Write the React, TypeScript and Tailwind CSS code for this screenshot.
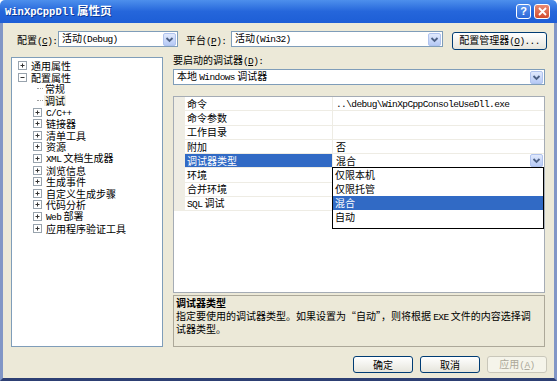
import React from "react";

// ASCII parts look like SimSun's half-width glyphs, so use a narrow mono
const M: React.FC<{ children: React.ReactNode }> = ({ children }) => (
  <span className="font-['Liberation_Mono',monospace] text-[9.5px] tracking-[-0.6px]">{children}</span>
);

const DropBtn = () => (
  <svg width="13" height="13" viewBox="0 0 13 13" className="shrink-0">
    <defs>
      <linearGradient id="dropg" x1="0" y1="0" x2="0" y2="1">
        <stop offset="0" stopColor="#e3ebfd" />
        <stop offset="1" stopColor="#b4c8f5" />
      </linearGradient>
    </defs>
    <rect x="0.5" y="0.5" width="12" height="12" rx="1.5" fill="url(#dropg)" stroke="#b0c3ee" />
    <path d="M3.5 5L6.5 8L9.5 5" fill="none" stroke="#4d6185" strokeWidth="1.8" />
  </svg>
);

const ExpandBox: React.FC<{ open?: boolean }> = ({ open }) => (
  <svg width="9" height="9" viewBox="0 0 9 9" className="shrink-0">
    <rect x="0.5" y="0.5" width="8" height="8" fill="#fff" stroke="#98a3ad" />
    <path d="M2.5 4.5H6.5" stroke="#333" />
    {!open && <path d="M4.5 2.5V6.5" stroke="#333" />}
  </svg>
);

const Combo: React.FC<{ className: string; children: React.ReactNode }> = ({ className, children }) => (
  <div className={`h-[16px] flex items-center border border-[#7f9db9] bg-white pl-[3px] pr-px ${className}`}>
    <div className="flex-1 whitespace-nowrap leading-[14px]">{children}</div>
    <DropBtn />
  </div>
);

const XpButton: React.FC<{ children: React.ReactNode; disabled?: boolean }> = ({ children, disabled }) => (
  <div
    className={
      disabled
        ? "w-[60px] h-[17px] flex items-center justify-center rounded-[3px] border border-[#c9c7ba] bg-[#f5f4ea] text-[#aca899] leading-none"
        : "w-[60px] h-[17px] flex items-center justify-center rounded-[3px] border border-[#003c74] bg-gradient-to-b from-white to-[#e6e5dc] leading-none"
    }
  >
    <span>{children}</span>
  </div>
);

type TreeNode = { label: React.ReactNode; kind: "top" | "topOpen" | "child" | "leaf"; sel?: boolean };

const tree: TreeNode[] = [
  { label: "通用属性", kind: "top" },
  { label: "配置属性", kind: "topOpen" },
  { label: "常规", kind: "leaf" },
  { label: "调试", kind: "leaf", sel: true },
  { label: <M>C/C++</M>, kind: "child" },
  { label: "链接器", kind: "child" },
  { label: "清单工具", kind: "child" },
  { label: "资源", kind: "child" },
  { label: <><M>XML</M> 文档生成器</>, kind: "child" },
  { label: "浏览信息", kind: "child" },
  { label: "生成事件", kind: "child" },
  { label: "自定义生成步骤", kind: "child" },
  { label: "代码分析", kind: "child" },
  { label: <><M>Web</M> 部署</>, kind: "child" },
  { label: "应用程序验证工具", kind: "child" },
];

const rows: { n: React.ReactNode; v: React.ReactNode; sel?: boolean }[] = [
  { n: "命令", v: <M>..\debug\WinXpCppConsoleUseDll.exe</M> },
  { n: "命令参数", v: "" },
  { n: "工作目录", v: "" },
  { n: "附加", v: "否" },
  { n: "调试器类型", v: "混合", sel: true },
  { n: "环境", v: "" },
  { n: "合并环境", v: "" },
  { n: <><M>SQL</M> 调试</>, v: "" },
];

const options = ["仅限本机", "仅限托管", "混合", "自动"];

export default function App() {
  return (
    <div className="w-[557px] h-[383px] bg-white overflow-hidden font-['Noto_Sans_CJK_SC',sans-serif] text-[10px] text-black">
      <div className="h-[381px] flex flex-col">
        {/* title bar */}
        <div className="h-[23px] flex items-center rounded-t-[5px] bg-gradient-to-b from-[#4d8fec] via-[#2566db] to-[#1d5ed6] pl-[5px] pr-[7px]">
          <div className="flex-1 text-white font-bold text-[11.5px] leading-none [text-shadow:1px_1px_0_#0b3a9a]">
            <span className="font-['Liberation_Mono',monospace] text-[10.5px]">WinXpCppDll</span> 属性页
          </div>
          <div className="w-[15px] h-[15px] rounded-[3px] border border-white bg-gradient-to-b from-[#5b95f0] to-[#2d68d8] flex items-center justify-center text-white font-bold text-[11px] leading-none font-['Liberation_Sans',sans-serif]">
            ?
          </div>
          <div className="ml-[3px] w-[16px] h-[15px] rounded-[3px] border border-white bg-gradient-to-b from-[#e98a72] to-[#d24a2c] flex items-center justify-center">
            <svg width="9" height="9" viewBox="0 0 9 9">
              <path d="M1 1L8 8M8 1L1 8" stroke="#fff" strokeWidth="1.8" />
            </svg>
          </div>
        </div>

        {/* body */}
        <div className="flex-1 flex flex-col bg-[#ece9d8] border-x-[3px] border-x-[#8196c6] border-b-[3px] border-b-[#2d3f73] pl-[8px] pt-[8px] pb-[5px]">
          {/* config row */}
          <div className="flex items-start h-[19px]">
            <div className="ml-[6px] w-[41px] h-[16px] mt-px leading-[16px] whitespace-nowrap">
              配置<M>(<u>C</u>):</M>
            </div>
            <Combo className="w-[120px]">
              活动<M>(Debug)</M>
            </Combo>
            <div className="ml-[8px] w-[45px] h-[16px] mt-px leading-[16px] whitespace-nowrap">
              平台<M>(<u>P</u>):</M>
            </div>
            <Combo className="w-[212px]">
              活动<M>(Win32)</M>
            </Combo>
            <div className="ml-[9px] mt-px w-[95px] h-[18px] flex items-center justify-center rounded-[3px] border border-[#003c74] bg-gradient-to-b from-white to-[#e6e5dc] leading-none whitespace-nowrap">
              <span>
                配置管理器<M>(<u>O</u>)...</M>
              </span>
            </div>
          </div>

          {/* main area */}
          <div className="mt-[4px] flex h-[293px]">
            {/* tree */}
            <div className="mt-[3px] w-[152px] h-[290px] border border-[#7f9db9] bg-white pt-[2px]">
              {tree.map((t, i) => (
                <div key={i} className="h-[11.6px] flex items-center leading-[11px] whitespace-nowrap">
                  {t.kind === "top" || t.kind === "topOpen" ? (
                    <>
                      <div className="w-[6px]" />
                      <ExpandBox open={t.kind === "topOpen"} />
                      <div className="ml-[4px]">{t.label}</div>
                    </>
                  ) : t.kind === "child" ? (
                    <>
                      <div className="w-[21px]" />
                      <ExpandBox />
                      <div className="ml-[4px]">{t.label}</div>
                    </>
                  ) : (
                    <>
                      <div className="w-[25px]" />
                      <div className="w-[6px] border-t border-dotted border-[#a0a0a0]" />
                      <div className={t.sel ? "ml-px px-px bg-[#f1efe4]" : "ml-px px-px"}>{t.label}</div>
                    </>
                  )}
                </div>
              ))}
            </div>

            {/* right column */}
            <div className="ml-[10px] w-[372px] flex flex-col">
              <div className="h-[12px] leading-[12px] mb-[3px] whitespace-nowrap">
                要启动的调试器<M>(<u>D</u>):</M>
              </div>
              <Combo className="w-full">
                本地 <M>Windows</M> 调试器
              </Combo>

              {/* property grid */}
              <div className="relative mt-[11px] h-[197px] border border-[#a5acb5] bg-white">
                {rows.map((r, i) => (
                  <div key={i} className="h-[14.3px] flex">
                    <div className="w-[11px] bg-[#efede4]" />
                    <div
                      className={
                        r.sel
                          ? "w-[148px] pl-[2px] flex items-center bg-[#316ac5] text-white border-b border-r border-[#eeece4] leading-none"
                          : "w-[148px] pl-[2px] flex items-center border-b border-r border-[#eeece4] leading-none"
                      }
                    >
                      <span>{r.n}</span>
                    </div>
                    <div className="flex-1 pl-[3px] pr-px flex items-center border-b border-[#eeece4] leading-none whitespace-nowrap">
                      <div className="flex-1">{r.v}</div>
                      {r.sel && <DropBtn />}
                    </div>
                  </div>
                ))}

                {/* open dropdown list */}
                <div className="absolute left-[158px] top-[70px] w-[212px] h-[62px] border border-black bg-white">
                  {options.map((o) => (
                    <div
                      key={o}
                      className={
                        o === "混合"
                          ? "h-[14px] pl-[2px] flex items-center bg-[#316ac5] text-white leading-none"
                          : "h-[14px] pl-[2px] flex items-center leading-none"
                      }
                    >
                      {o}
                    </div>
                  ))}
                </div>
              </div>

              {/* description */}
              <div className="mt-[2px] h-[52px] border border-[#aca899] pl-[2px] pt-[1px] whitespace-nowrap">
                <div className="h-[12px] leading-[12px] font-bold">调试器类型</div>
                <div className="h-[13px] leading-[13px]">
                  指定要使用的调试器类型。如果设置为“自动”，则将根据 <M>EXE</M> 文件的内容选择调
                </div>
                <div className="h-[13px] leading-[13px]">试器类型。</div>
              </div>
            </div>
          </div>

          {/* dialog buttons */}
          <div className="mt-[9px] flex justify-end gap-[7px] pr-[7px]">
            <XpButton>确定</XpButton>
            <XpButton>取消</XpButton>
            <XpButton disabled>
              应用<M>(<u>A</u>)</M>
            </XpButton>
          </div>
        </div>
      </div>
    </div>
  );
}
